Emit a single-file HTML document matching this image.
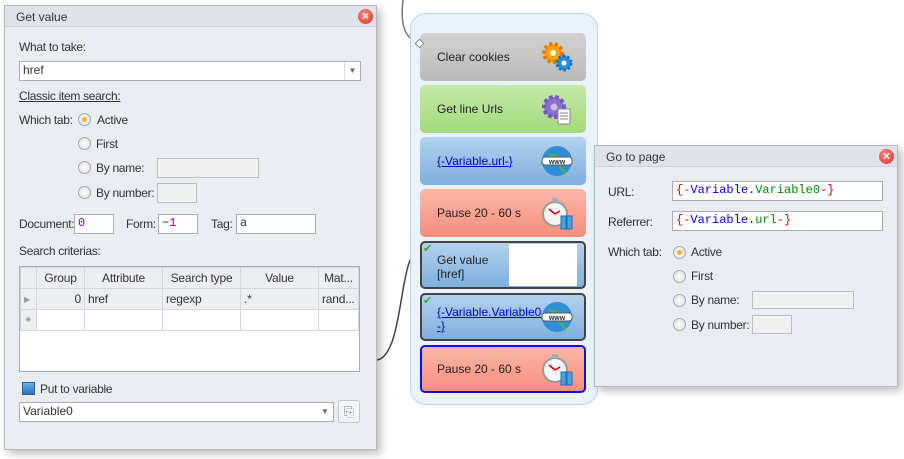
<!DOCTYPE html>
<html><head><style>
*{box-sizing:border-box;margin:0;padding:0}
body{width:904px;height:459px;background:#fff;position:relative;overflow:hidden;font-family:"Liberation Sans","DejaVu Sans",sans-serif;font-size:12px;color:#333}
.abs{position:absolute}
.lbl{letter-spacing:-0.3px}
.panel{position:absolute;background:#e9ecf1;border:1px solid #b5b8bd;box-shadow:4px 4px 8px rgba(0,0,0,.25)}
.title{position:absolute;left:0;right:0;top:0;height:21px;background:#dfe3e9;border-bottom:1px solid #cfd3d9}
.title span{position:absolute;left:11px;top:4px;color:#333}
.close{position:absolute;width:15px;height:15px;border-radius:50%;background:radial-gradient(circle at 40% 35%,#ff8a80,#d92a2a);color:#fff;font-size:12px;font-weight:bold;line-height:15px;text-align:center}
.inp{position:absolute;background:#fff;border:1px solid #a9adb3;font-size:12px;padding-left:3px;line-height:17px}
.dis{background:#f0f0f0;border-color:#b9bcc0}
.radio{position:absolute;width:13px;height:13px;border-radius:50%;border:1px solid #a4a7ab;background:radial-gradient(circle,#fff,#dcdcdc)}
.radio.on::after{content:"";position:absolute;left:3px;top:3px;width:5px;height:5px;border-radius:50%;background:#f5b41e}
.mono{font-family:"Liberation Mono",monospace}
table{border-collapse:collapse;font-size:12px;letter-spacing:-0.2px}
td{border:1px solid #d3d6da;height:21px;padding:0 3px;white-space:nowrap;overflow:hidden}
.blk{position:absolute;left:420px;width:166px;height:48px;border-radius:5px;font-size:12px}
.blk span{position:absolute;left:17px;top:17px;color:#222}
.ico{position:absolute;right:12px;top:7px;width:34px;height:34px}
</style></head><body>

<svg class="abs" style="left:0;top:0" width="904" height="459">
<path d="M403 0 C400 25 405 38 418 43" stroke="#777" stroke-width="1.5" fill="none"/>
<path d="M377 360 C405 355 398 250 420 250" stroke="#444" stroke-width="1.5" fill="none"/>
<path d="M586 305 C600 305 585 335 596 338" stroke="#444" stroke-width="1.5" fill="none"/>
</svg>

<div class="panel" style="left:4px;top:5px;width:373px;height:445px">
<div class="title"><span>Get value</span><div class="close" style="left:353px;top:3px">×</div></div>
</div>
<div class="abs lbl" style="left:19px;top:40px">What to take:</div>
<div class="inp" style="left:19px;top:61px;width:342px;height:20px">href</div>
<div class="abs" style="left:344px;top:62px;width:16px;height:18px;border-left:1px solid #ddd;color:#666;font-size:8px;text-align:center;line-height:18px">▼</div>
<div class="abs lbl" style="left:19px;top:89px;text-decoration:underline">Classic item search:</div>
<div class="abs lbl" style="left:19px;top:113px">Which tab:</div>
<div class="radio on" style="left:78px;top:113px"></div><div class="abs lbl" style="left:97px;top:113px">Active</div>
<div class="radio" style="left:78px;top:137px"></div><div class="abs lbl" style="left:96px;top:137px">First</div>
<div class="radio" style="left:78px;top:161px"></div><div class="abs lbl" style="left:96px;top:161px">By name:</div>
<div class="inp dis" style="left:157px;top:158px;width:102px;height:20px"></div>
<div class="radio" style="left:78px;top:186px"></div><div class="abs lbl" style="left:96px;top:186px">By number:</div>
<div class="inp dis" style="left:157px;top:183px;width:40px;height:20px"></div>
<div class="abs lbl" style="left:19px;top:217px">Document:</div>
<div class="inp mono" style="left:74px;top:214px;width:40px;height:20px;color:#909">0</div>
<div class="abs lbl" style="left:126px;top:217px">Form:</div>
<div class="inp mono" style="left:158px;top:214px;width:40px;height:20px;color:#909"><span style="color:#222">−</span>1</div>
<div class="abs lbl" style="left:211px;top:217px">Tag:</div>
<div class="inp mono" style="left:236px;top:214px;width:80px;height:20px">a</div>
<div class="abs lbl" style="left:19px;top:244px">Search criterias:</div>
<div class="abs" style="left:19px;top:266px;width:341px;height:106px;background:#fff;border:1px solid #a9adb3">
<table style="width:339px;table-layout:fixed">
<tr style="background:#eceef1"><td style="width:16px"></td><td style="width:48px;text-align:center">Group</td><td style="width:78px;text-align:center">Attribute</td><td style="width:78px;text-align:center">Search type</td><td style="width:78px;text-align:center">Value</td><td style="text-align:center">Mat...</td></tr>
<tr style="background:#eceef1"><td style="color:#999;font-size:8px">▶</td><td style="text-align:right">0</td><td>href</td><td>regexp</td><td>.*</td><td>rand...</td></tr>
<tr style="background:#fff"><td style="color:#999;font-size:10px;background:#eceef1">⁕</td><td></td><td></td><td></td><td></td><td></td></tr>
</table></div>
<div class="abs" style="left:22px;top:382px;width:13px;height:13px;background:linear-gradient(#6eb0e8,#2e74c0);border:1px solid #2a5f9a"></div>
<div class="abs lbl" style="left:40px;top:382px">Put to variable</div>
<div class="inp" style="left:19px;top:402px;width:315px;height:20px">Variable0</div>
<div class="abs" style="left:317px;top:403px;width:16px;height:18px;color:#666;font-size:8px;text-align:center;line-height:18px">▼</div>
<div class="abs" style="left:338px;top:400px;width:22px;height:23px;border:1px solid #c2c5c9;border-radius:3px;background:#f4f5f7;color:#888;text-align:center;line-height:21px;font-size:13px">⎘</div>

<div class="abs" style="left:410px;top:13px;width:188px;height:392px;border:1px solid #b8d3ee;border-radius:16px;background:#eaf3fd"></div>
<div class="abs" style="left:416px;top:40px;width:7px;height:7px;background:#fff;border:1px solid #888;transform:rotate(45deg);z-index:3"></div>
<div class="blk" style="top:33px;background:linear-gradient(#d2d2d2,#b9b9b9)"><span>Clear cookies</span>
<svg class="ico" viewBox="0 0 34 34"><circle cx="13" cy="13" r="9" fill="#f6a20c" stroke="#e07800" stroke-width="4" stroke-dasharray="3 2.5"/><circle cx="13" cy="13" r="3" fill="#fff"/><circle cx="24" cy="23" r="7" fill="#2a8ee0" stroke="#1a6ec0" stroke-width="3" stroke-dasharray="2.5 2"/><circle cx="24" cy="23" r="2.5" fill="#fff"/></svg></div>
<div class="blk" style="top:85px;background:linear-gradient(#c4e8a8,#a3da7c)"><span>Get line Urls</span>
<svg class="ico" viewBox="0 0 34 34"><circle cx="14" cy="15" r="10" fill="#8a70d0" stroke="#7058c0" stroke-width="4" stroke-dasharray="3.5 2.5"/><circle cx="14" cy="15" r="3.5" fill="#c8bde8"/><rect x="18" y="17" width="12" height="15" fill="#fff" stroke="#888"/><path d="M20 21h8M20 24h8M20 27h8" stroke="#888"/></svg></div>
<div class="blk" style="top:137px;background:linear-gradient(#b3d1ee,#7fb0de)"><span style="color:#00c;text-decoration:underline">{-Variable.url-}</span>
<svg class="ico" viewBox="0 0 34 34"><circle cx="17" cy="17" r="15" fill="#2e8fd8"/><path d="M8 9c5 2 8 0 11 4s-3 7 2 10 6 6 4 8" fill="#4cb840" opacity=".9"/><rect x="2" y="13" width="30" height="8" rx="3" fill="#fff" stroke="#555"/><text x="17" y="20" font-size="7" text-anchor="middle" font-family="Liberation Sans" font-weight="bold" fill="#333">www</text></svg></div>
<div class="blk" style="top:189px;background:linear-gradient(#fcb7aa,#f68e7c)"><span>Pause 20 - 60 s</span>
<svg class="ico" viewBox="0 0 34 34"><circle cx="15" cy="18" r="12" fill="#f4f4f4" stroke="#999" stroke-width="2"/><path d="M15 18l-6-5M15 18l5-3" stroke="#c00" stroke-width="1.5"/><rect x="12" y="2" width="6" height="4" fill="#aaa"/><rect x="21" y="20" width="5" height="13" fill="#4aa0e0" stroke="#2070b0"/><rect x="27" y="20" width="5" height="13" fill="#4aa0e0" stroke="#2070b0"/></svg></div>
<div class="blk" style="top:241px;background:linear-gradient(#b3d1ee,#7fb0de);border:2px solid #444"><span style="left:15px;top:10px;line-height:14px">Get value<br>[href]</span><div class="abs" style="left:87px;top:1px;width:68px;height:42px;background:#fff"></div><div class="abs" style="left:1px;top:-1px;color:#3a3;font-size:11px">✔</div></div>
<div class="blk" style="top:293px;background:linear-gradient(#b3d1ee,#7fb0de);border:2px solid #444"><span style="left:15px;top:10px;line-height:14px;color:#00c;text-decoration:underline">{-Variable.Variable0<br>-}</span><div class="abs" style="left:1px;top:-1px;color:#3a3;font-size:11px">✔</div>
<svg class="ico" style="right:10px;top:5px" viewBox="0 0 34 34"><circle cx="17" cy="17" r="15" fill="#2e8fd8"/><path d="M8 9c5 2 8 0 11 4s-3 7 2 10 6 6 4 8" fill="#4cb840" opacity=".9"/><rect x="2" y="13" width="30" height="8" rx="3" fill="#fff" stroke="#555"/><text x="17" y="20" font-size="7" text-anchor="middle" font-family="Liberation Sans" font-weight="bold" fill="#333">www</text></svg></div>
<div class="blk" style="top:345px;background:linear-gradient(#fcb7aa,#f68e7c);border:2px solid #1010e0"><span style="left:15px;top:15px">Pause 20 - 60 s</span>
<svg class="ico" style="right:10px;top:5px" viewBox="0 0 34 34"><circle cx="15" cy="18" r="12" fill="#f4f4f4" stroke="#999" stroke-width="2"/><path d="M15 18l-6-5M15 18l5-3" stroke="#c00" stroke-width="1.5"/><rect x="12" y="2" width="6" height="4" fill="#aaa"/><rect x="21" y="20" width="5" height="13" fill="#4aa0e0" stroke="#2070b0"/><rect x="27" y="20" width="5" height="13" fill="#4aa0e0" stroke="#2070b0"/></svg></div>

<div class="panel" style="left:594px;top:145px;width:304px;height:242px">
<div class="title"><span>Go to page</span><div class="close" style="left:284px;top:3px">×</div></div>
</div>
<div class="abs lbl" style="left:608px;top:185px">URL:</div>
<div class="inp mono" style="left:672px;top:181px;width:211px;height:20px"><span style="color:#e00">{-</span><span style="color:#00e">Variable.</span><span style="color:#080">Variable0</span><span style="color:#e00">-}</span></div>
<div class="abs lbl" style="left:608px;top:215px">Referrer:</div>
<div class="inp mono" style="left:672px;top:211px;width:211px;height:20px"><span style="color:#e00">{-</span><span style="color:#00e">Variable.</span><span style="color:#080">url</span><span style="color:#e00">-}</span></div>
<div class="abs lbl" style="left:608px;top:245px">Which tab:</div>
<div class="radio on" style="left:673px;top:246px"></div><div class="abs lbl" style="left:691px;top:245px">Active</div>
<div class="radio" style="left:673px;top:270px"></div><div class="abs lbl" style="left:691px;top:269px">First</div>
<div class="radio" style="left:673px;top:294px"></div><div class="abs lbl" style="left:691px;top:293px">By name:</div>
<div class="inp dis" style="left:752px;top:291px;width:102px;height:18px"></div>
<div class="radio" style="left:673px;top:318px"></div><div class="abs lbl" style="left:691px;top:318px">By number:</div>
<div class="inp dis" style="left:752px;top:315px;width:40px;height:19px"></div>
</body></html>
